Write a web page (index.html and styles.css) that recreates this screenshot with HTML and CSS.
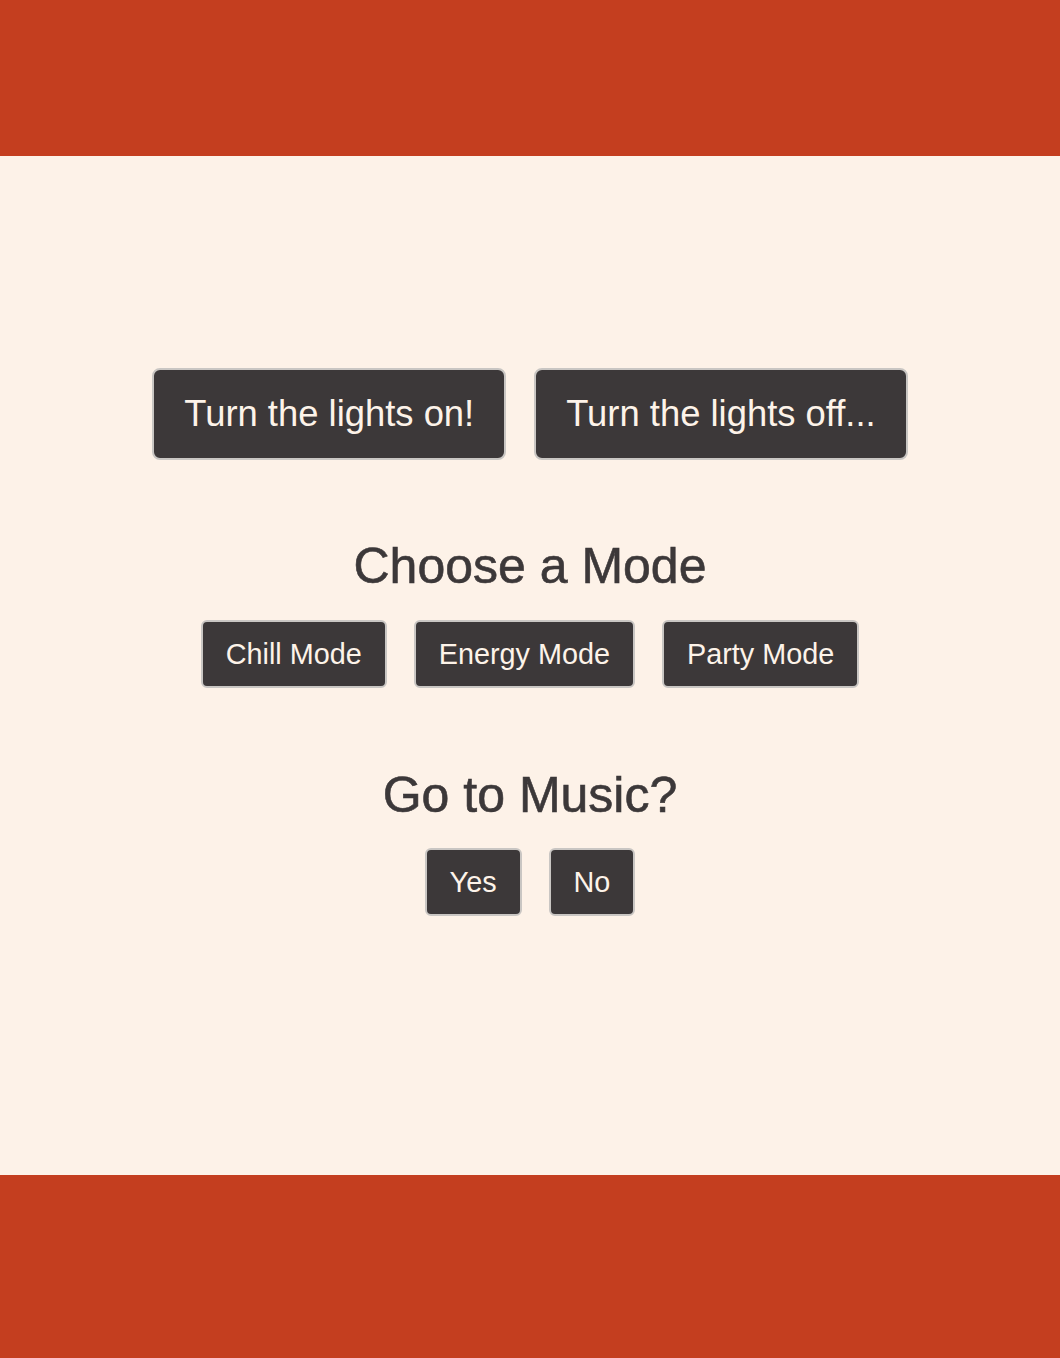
FILE: index.html
```html
<!DOCTYPE html>
<html lang="en">
<head>
<meta charset="utf-8">
<title>Lights</title>
<link rel="stylesheet" href="styles.css">
</head>
<body>
<header class="bar bar-top"></header>
<main class="main">
  <div class="row row-lights">
    <button class="btn btn-big">Turn the lights on!</button>
    <button class="btn btn-big">Turn the lights off...</button>
  </div>
  <h2 class="title title-mode">Choose a Mode</h2>
  <div class="row">
    <button class="btn btn-small">Chill Mode</button>
    <button class="btn btn-small">Energy Mode</button>
    <button class="btn btn-small">Party Mode</button>
  </div>
  <h2 class="title title-music">Go to Music?</h2>
  <div class="row">
    <button class="btn btn-small">Yes</button>
    <button class="btn btn-small">No</button>
  </div>
</main>
<footer class="bar bar-bottom"></footer>
</body>
</html>
```
FILE: styles.css
```css
html, body {
  margin: 0;
  padding: 0;
}
body {
  background: #fdf2e8;
  font-family: "Liberation Sans", Arial, Helvetica, sans-serif;
  color: #3c3839;
}
.bar {
  background: #c43e1f;
}
.bar-top {
  height: 156px;
}
.bar-bottom {
  height: 183px;
}
.main {
  height: 1019px;
  box-sizing: border-box;
  padding-top: 212px;
  display: flex;
  flex-direction: column;
  align-items: center;
}
.row {
  display: flex;
  justify-content: center;
  gap: 27px;
}
.row-lights {
  gap: 28px;
}
.btn {
  background: #3c3839;
  color: #fdf3e9;
  border: 2px solid #c9c6c3;
  font-family: "Liberation Sans", Arial, Helvetica, sans-serif;
  cursor: pointer;
  margin: 0;
}
.btn-big {
  font-size: 36.4px;
  line-height: 44px;
  padding: 22px 30px;
  border-radius: 8px;
}
.btn-small {
  font-size: 28.8px;
  line-height: 34px;
  padding: 15px 23px;
  border-radius: 6px;
}
.title {
  margin: 0;
  font-size: 50px;
  line-height: 56px;
  font-weight: normal;
  -webkit-text-stroke: 0.6px #3c3839;
  text-align: center;
}
.title-mode {
  margin-top: 78px;
  margin-bottom: 26px;
}
.title-music {
  margin-top: 79px;
  margin-bottom: 25px;
}
```
